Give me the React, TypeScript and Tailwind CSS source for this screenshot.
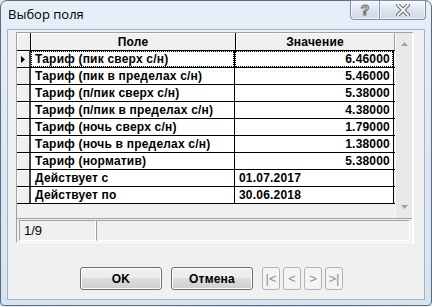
import React from "react";

const rows: { name: string; value: string; num: boolean }[] = [
  { name: "Тариф (пик сверх с/н)", value: "6.46000", num: true },
  { name: "Тариф (пик в пределах с/н)", value: "5.46000", num: true },
  { name: "Тариф (п/пик сверх с/н)", value: "5.38000", num: true },
  { name: "Тариф (п/пик в пределах с/н)", value: "4.38000", num: true },
  { name: "Тариф (ночь сверх с/н)", value: "1.79000", num: true },
  { name: "Тариф (ночь в пределах с/н)", value: "1.38000", num: true },
  { name: "Тариф (норматив)", value: "5.38000", num: true },
  { name: "Действует с", value: "01.07.2017", num: false },
  { name: "Действует по", value: "30.06.2018", num: false },
];

function WinButton({ label }: { label: string }) {
  return (
    <button className="h-[23px] w-[82px] rounded-[3px] border border-[#707070] bg-[linear-gradient(#f2f2f2_0%,#ebebeb_50%,#dddddd_50%,#cfcfcf_100%)] text-[12px] font-bold tracking-[0.2px] text-black shadow-[inset_0_0_0_1px_#fcfcfc]">
      {label}
    </button>
  );
}

function NavButton({ label }: { label: string }) {
  return (
    <button className="h-[23px] w-[18px] rounded-[3px] border border-[#adb2b5] bg-[#f4f4f4] text-[13px] text-[#8d9196]">
      {label}
    </button>
  );
}

export default function App() {
  return (
    <div className="relative h-[307px] w-[432px] overflow-hidden bg-[linear-gradient(90deg,#dfe9f3,#f4f8fc_30%,#c9d9ea_60%,#f2f6fb)] font-['Liberation_Sans',Arial,sans-serif]">
      {/* window */}
      <div className="flex h-[306px] w-[432px] flex-col rounded-t-[7px] rounded-b-[4px] border border-[#5f6b79] bg-[linear-gradient(180deg,#e6eff8,#dde9f5_40%,#d6e4f2)]">
        {/* title bar */}
        <div className="relative flex h-[28px] shrink-0 items-center pl-[7px]">
          <span className="text-[13px] text-black font-['Open_Sans',sans-serif]">Выбор поля</span>
          <div className="absolute right-[5px] top-[-1px] flex h-[20px]">
            <div className="flex w-[30px] items-center justify-center rounded-bl-[4px] border border-[#7d8ea2] bg-[linear-gradient(#f3f7fb,#dbe5ef_50%,#cdd9e6)] shadow-[inset_0_0_0_1px_rgba(255,255,255,0.7)]">
              <span className="text-[14px] font-bold leading-none text-[#f5f5f5] [-webkit-text-stroke:1px_#6b6b6b]">?</span>
            </div>
            <div className="flex w-[46px] items-center justify-center rounded-br-[4px] border border-l-0 border-[#7d8ea2] bg-[linear-gradient(#f3f7fb,#dbe5ef_50%,#cdd9e6)] shadow-[inset_0_0_0_1px_rgba(255,255,255,0.7)]">
              <svg width="14" height="12" viewBox="0 0 14 12">
                <path d="M2 1 L12 11 M12 1 L2 11" stroke="#6b6b6b" strokeWidth="4" strokeLinecap="square" />
                <path d="M2 1 L12 11 M12 1 L2 11" stroke="#f5f5f5" strokeWidth="2" strokeLinecap="square" />
              </svg>
            </div>
          </div>
        </div>

        {/* client area */}
        <div className="mx-[6px] flex h-[271px] flex-col border border-[#a3b3c5] bg-[#f0f0f0] pl-[8px] pt-[2px]">
          {/* grid panel */}
          <div className="flex h-[211px] w-[398px] flex-col border-t border-l border-[#a0a0a0] border-r-2 border-b border-r-[#ffffff] border-b-[#ffffff]">
            <div className="flex h-[189px] border-b border-[#a0a0a0]">
              <div className="flex w-[378px] flex-col text-[12px] font-bold tracking-[0.2px] text-black">
                {/* header */}
                <div className="flex h-[18px] border-b border-black bg-[#f0f0f0]">
                  <div className="w-[14px] border-r border-black shadow-[inset_1px_1px_0_#fff]" />
                  <div className="flex w-[205px] items-center justify-center border-r border-black shadow-[inset_1px_1px_0_#fff]">Поле</div>
                  <div className="flex w-[159px] items-center justify-center border-r border-[#a0a0a0] shadow-[inset_1px_1px_0_#fff]">Значение</div>
                </div>
                {rows.map((r, i) => (
                  <div key={r.name} className="flex h-[17px] border-b border-black">
                    <div className="flex w-[14px] items-center justify-center border-r-2 border-[#404040] bg-[#f0f0f0] shadow-[inset_1px_1px_0_#fff]">
                      {i === 0 && (
                        <svg width="4" height="7" viewBox="0 0 4 7">
                          <path d="M0 0 L4 3.5 L0 7 Z" fill="#000" />
                        </svg>
                      )}
                    </div>
                    <div className="w-[204px] border-r border-black bg-white">
                      <div className={`flex h-full items-center pl-[3px] ${i === 0 ? "border border-dotted border-black" : "border border-transparent"}`}>
                        {r.name}
                      </div>
                    </div>
                    <div className="w-[159px] border-r border-black bg-white">
                      <div
                        className={`flex h-full items-center ${r.num ? "justify-end pr-[2px]" : "pl-[3px]"} ${i === 0 ? "border border-dotted border-black" : "border border-transparent"}`}
                      >
                        {r.value}
                      </div>
                    </div>
                  </div>
                ))}
              </div>
              {/* scrollbar */}
              <div className="flex w-[17px] flex-col items-center justify-between border-l border-[#fbfbfb] bg-[#e9e9e9] py-[9px]">
                <svg width="7" height="4" viewBox="0 0 7 4">
                  <path d="M0 4 L3.5 0 L7 4 Z" fill="#a3a3a3" />
                </svg>
                <svg width="7" height="4" viewBox="0 0 7 4">
                  <path d="M0 0 L3.5 4 L7 0 Z" fill="#a3a3a3" />
                </svg>
              </div>
            </div>
            {/* status bar */}
            <div className="flex flex-1 px-[2px] pt-[1px] pb-[1px]">
              <div className="flex w-[77px] items-center border-t border-l border-[#a0a0a0] border-r border-b border-r-white border-b-white pl-[4px] text-[13px] text-black">
                1/9
              </div>
              <div className="flex-1 border-t border-l border-[#a0a0a0] border-r border-b border-r-white border-b-white" />
            </div>
          </div>

          {/* buttons */}
          <div className="mt-[24px] flex gap-[9px] pl-[64px]">
            <WinButton label="OK" />
            <WinButton label="Отмена" />
            <div className="flex gap-[3px]">
              <NavButton label="|<" />
              <NavButton label="<" />
              <NavButton label=">" />
              <NavButton label=">|" />
            </div>
          </div>
        </div>
      </div>
    </div>
  );
}
